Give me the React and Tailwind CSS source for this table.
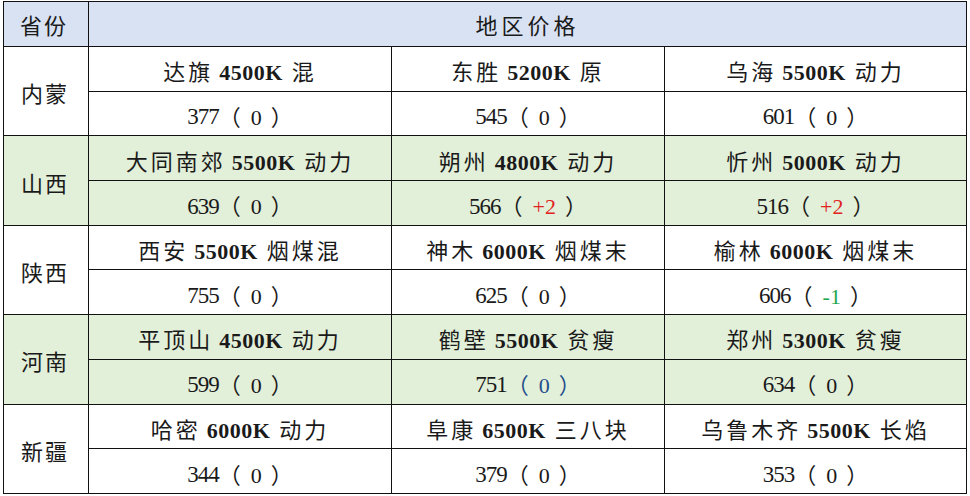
import React from "react";

const rows = [
  {
    prov: "内蒙",
    green: false,
    cells: [
      { name: "达旗", k: "4500K", type: "混", price: "377", diff: "0" },
      { name: "东胜", k: "5200K", type: "原", price: "545", diff: "0" },
      { name: "乌海", k: "5500K", type: "动力", price: "601", diff: "0" },
    ],
  },
  {
    prov: "山西",
    green: true,
    cells: [
      { name: "大同南郊", k: "5500K", type: "动力", price: "639", diff: "0" },
      { name: "朔州", k: "4800K", type: "动力", price: "566", diff: "+2", tone: "up" },
      { name: "忻州", k: "5000K", type: "动力", price: "516", diff: "+2", tone: "up" },
    ],
  },
  {
    prov: "陕西",
    green: false,
    cells: [
      { name: "西安", k: "5500K", type: "烟煤混", price: "755", diff: "0" },
      { name: "神木", k: "6000K", type: "烟煤末", price: "625", diff: "0" },
      { name: "榆林", k: "6000K", type: "烟煤末", price: "606", diff: "-1", tone: "down" },
    ],
  },
  {
    prov: "河南",
    green: true,
    cells: [
      { name: "平顶山", k: "4500K", type: "动力", price: "599", diff: "0" },
      { name: "鹤壁", k: "5500K", type: "贫瘦", price: "751", diff: "0", tone: "blue" },
      { name: "郑州", k: "5300K", type: "贫瘦", price: "634", diff: "0" },
    ],
  },
  {
    prov: "新疆",
    green: false,
    cells: [
      { name: "哈密", k: "6000K", type: "动力", price: "344", diff: "0" },
      { name: "阜康", k: "6500K", type: "三八块", price: "379", diff: "0" },
      { name: "乌鲁木齐", k: "5500K", type: "长焰", price: "353", diff: "0" },
    ],
  },
];

// price line: （change） with the change coloured
const Diff = ({ c }) => {
  const inner = <span className="ml-[10px] mr-[9px]">{c.diff}</span>;
  if (c.tone === "blue") {
    return <span className="text-[#1f4e8c]">（{inner}）</span>;
  }
  if (c.tone === "up") {
    return (
      <>
        （<span className="text-[#e0231c]">{inner}</span>）
      </>
    );
  }
  if (c.tone === "down") {
    return (
      <>
        （<span className="text-[#1ea84f]">{inner}</span>）
      </>
    );
  }
  return <>（{inner}）</>;
};

const line = "border-r-[1.5px] border-b-[1.5px] border-[#111]";

export default function App() {
  return (
    <div className="w-[970px] h-[496px] bg-white pt-px pl-[3px]">
      <div
        className="grid grid-cols-[85px_303px_273px_302px] grid-rows-[45px_repeat(10,44.7px)] border-l-[1.5px] border-t-[1.5px] border-[#111] w-fit text-[22px] text-[#1a1a1a]"
        style={{ fontFamily: '"Liberation Serif", "Noto Sans CJK SC", serif' }}
      >
        <div className={`bg-[#d9e2f3] ${line} flex items-center pl-[16px] pt-[4px] tracking-[2px]`}>
          省份
        </div>
        <div className={`col-span-3 bg-[#d9e2f3] ${line} flex items-center justify-center pt-[4px] tracking-[4px]`}>
          地区价格
        </div>

        {rows.map((r) => {
          const bg = r.green ? "bg-[#e2efd9]" : "bg-white";
          return (
            <React.Fragment key={r.prov}>
              <div
                className={`row-span-2 ${bg} ${line} flex items-center pl-[17px] pt-[7px] tracking-[2px]`}
              >
                {r.prov}
              </div>
              {r.cells.map((c) => (
                <div
                  key={c.name}
                  className={`${bg} ${line} flex items-center justify-center whitespace-nowrap pt-[8px]`}
                >
                  <span className="tracking-[3px]">{c.name}</span>
                  <span className="font-bold tracking-[0.5px] ml-[6px] mr-[9px]">{c.k}</span>
                  <span className="tracking-[3px]">{c.type}</span>
                </div>
              ))}
              {r.cells.map((c) => (
                <div
                  key={c.name + "p"}
                  className={`${bg} ${line} flex items-center justify-center whitespace-nowrap pt-[8px]`}
                >
                  <span className="text-[23px] tracking-[-1px]">{c.price}</span>
                  <Diff c={c} />
                </div>
              ))}
            </React.Fragment>
          );
        })}
      </div>
    </div>
  );
}
